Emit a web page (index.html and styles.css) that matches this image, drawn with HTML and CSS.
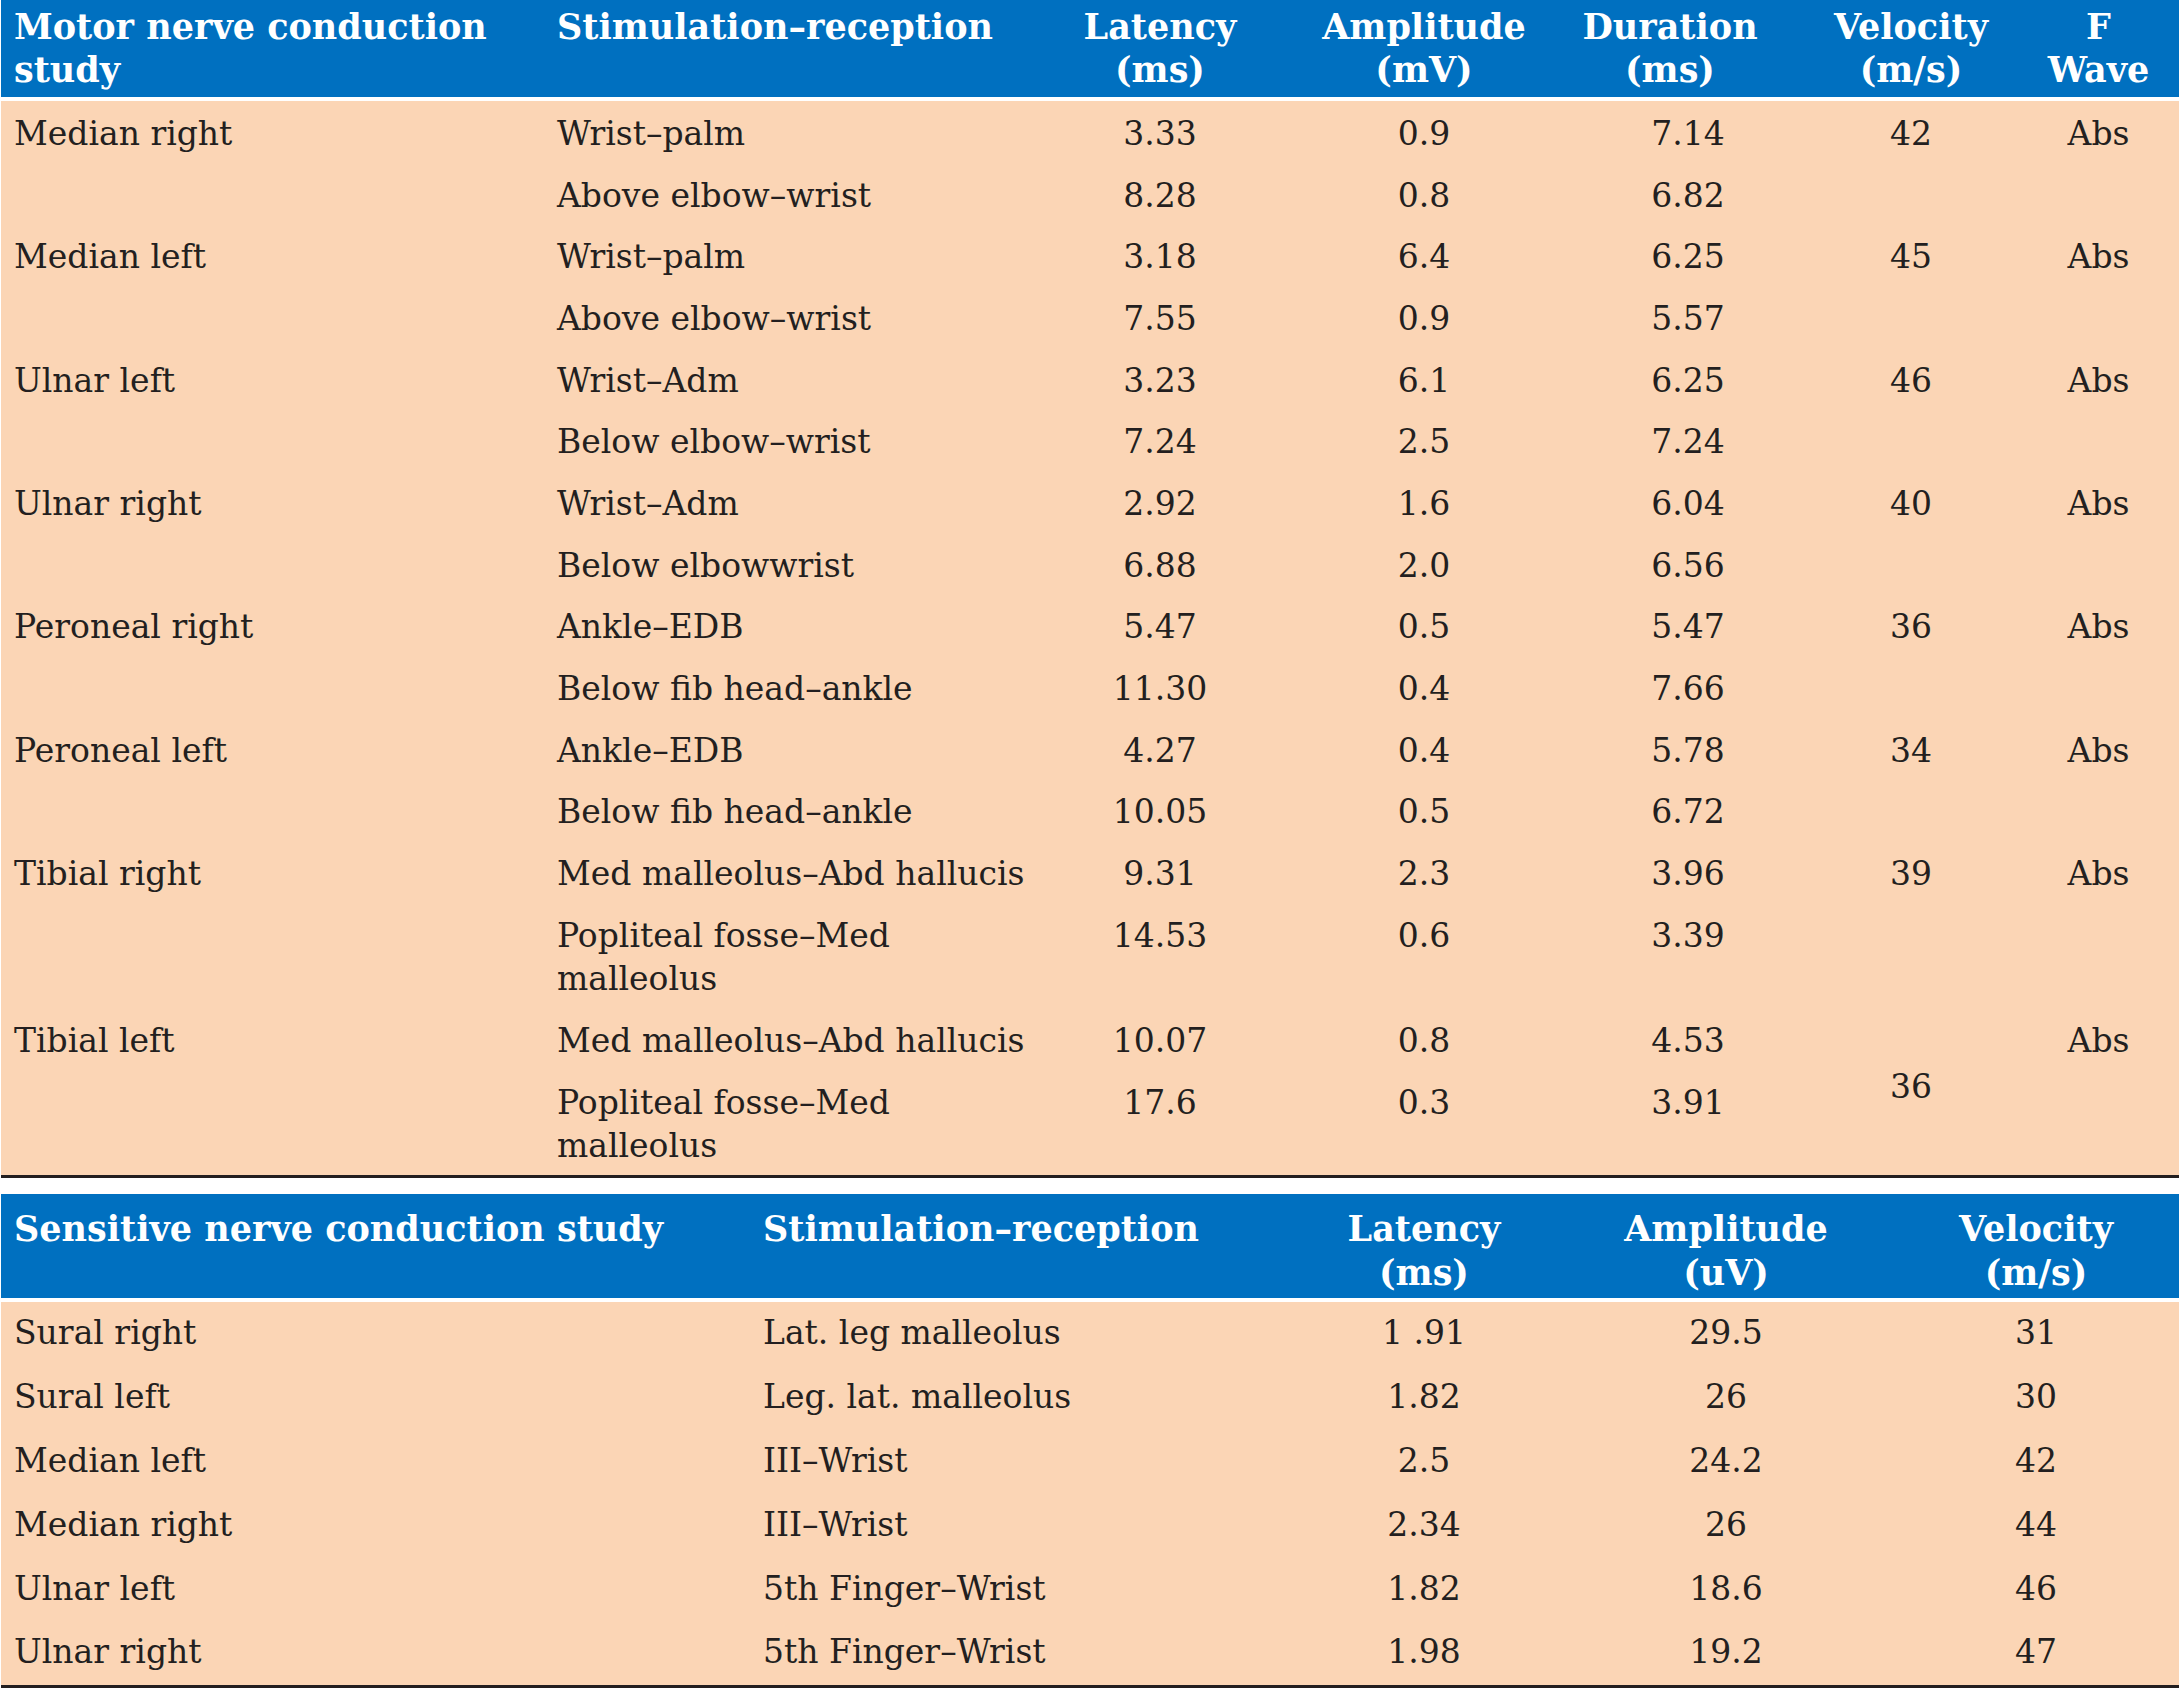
FILE: index.html
```html
<!DOCTYPE html>
<html lang="en">
<head>
<meta charset="utf-8">
<title>Nerve conduction studies</title>
<link rel="stylesheet" href="styles.css">
</head>
<body>
<div class="page">
<table class="ncs motor">
  <colgroup>
    <col class="m1"><col class="m2"><col class="m3"><col class="m4"><col class="m5"><col class="m6"><col class="m7">
  </colgroup>
  <thead>
    <tr>
      <th>Motor nerve conduction<br>study</th>
      <th>Stimulation–reception</th>
      <th class="num">Latency<br>(ms)</th>
      <th class="num">Amplitude<br>(mV)</th>
      <th class="num">Duration<br>(ms)</th>
      <th class="num">Velocity<br>(m/s)</th>
      <th class="num fw">F<br>Wave</th>
    </tr>
  </thead>
  <tbody>
    <tr><td rowspan="2">Median right</td><td>Wrist–palm</td><td class="num">3.33</td><td class="num">0.9</td><td class="num dur">7.14</td><td class="num" rowspan="2">42</td><td class="num fw" rowspan="2">Abs</td></tr>
    <tr><td>Above elbow–wrist</td><td class="num">8.28</td><td class="num">0.8</td><td class="num dur">6.82</td></tr>
    <tr><td rowspan="2">Median left</td><td>Wrist–palm</td><td class="num">3.18</td><td class="num">6.4</td><td class="num dur">6.25</td><td class="num" rowspan="2">45</td><td class="num fw" rowspan="2">Abs</td></tr>
    <tr><td>Above elbow–wrist</td><td class="num">7.55</td><td class="num">0.9</td><td class="num dur">5.57</td></tr>
    <tr><td rowspan="2">Ulnar left</td><td>Wrist–Adm</td><td class="num">3.23</td><td class="num">6.1</td><td class="num dur">6.25</td><td class="num" rowspan="2">46</td><td class="num fw" rowspan="2">Abs</td></tr>
    <tr><td>Below elbow–wrist</td><td class="num">7.24</td><td class="num">2.5</td><td class="num dur">7.24</td></tr>
    <tr><td rowspan="2">Ulnar right</td><td>Wrist–Adm</td><td class="num">2.92</td><td class="num">1.6</td><td class="num dur">6.04</td><td class="num" rowspan="2">40</td><td class="num fw" rowspan="2">Abs</td></tr>
    <tr><td>Below elbowwrist</td><td class="num">6.88</td><td class="num">2.0</td><td class="num dur">6.56</td></tr>
    <tr><td rowspan="2">Peroneal right</td><td>Ankle–EDB</td><td class="num">5.47</td><td class="num">0.5</td><td class="num dur">5.47</td><td class="num" rowspan="2">36</td><td class="num fw" rowspan="2">Abs</td></tr>
    <tr><td>Below fib head–ankle</td><td class="num">11.30</td><td class="num">0.4</td><td class="num dur">7.66</td></tr>
    <tr><td rowspan="2">Peroneal left</td><td>Ankle–EDB</td><td class="num">4.27</td><td class="num">0.4</td><td class="num dur">5.78</td><td class="num" rowspan="2">34</td><td class="num fw" rowspan="2">Abs</td></tr>
    <tr><td>Below fib head–ankle</td><td class="num">10.05</td><td class="num">0.5</td><td class="num dur">6.72</td></tr>
    <tr><td rowspan="2">Tibial right</td><td class="nowrap">Med malleolus–Abd hallucis</td><td class="num">9.31</td><td class="num">2.3</td><td class="num dur">3.96</td><td class="num" rowspan="2">39</td><td class="num fw" rowspan="2">Abs</td></tr>
    <tr><td>Popliteal fosse–Med<br>malleolus</td><td class="num">14.53</td><td class="num">0.6</td><td class="num dur">3.39</td></tr>
    <tr><td rowspan="2">Tibial left</td><td class="nowrap">Med malleolus–Abd hallucis</td><td class="num">10.07</td><td class="num">0.8</td><td class="num dur">4.53</td><td class="num mid" rowspan="2">36</td><td class="num fw" rowspan="2">Abs</td></tr>
    <tr><td>Popliteal fosse–Med<br>malleolus</td><td class="num">17.6</td><td class="num">0.3</td><td class="num dur">3.91</td></tr>
  </tbody>
</table>

<table class="ncs sensitive">
  <colgroup>
    <col class="s1"><col class="s2"><col class="s3"><col class="s4"><col class="s5">
  </colgroup>
  <thead>
    <tr>
      <th>Sensitive nerve conduction study</th>
      <th>Stimulation–reception</th>
      <th class="num">Latency<br>(ms)</th>
      <th class="num">Amplitude<br>(uV)</th>
      <th class="num">Velocity<br>(m/s)</th>
    </tr>
  </thead>
  <tbody>
    <tr><td>Sural right</td><td>Lat. leg malleolus</td><td class="num">1 .91</td><td class="num">29.5</td><td class="num">31</td></tr>
    <tr><td>Sural left</td><td>Leg. lat. malleolus</td><td class="num">1.82</td><td class="num">26</td><td class="num">30</td></tr>
    <tr><td>Median left</td><td>III–Wrist</td><td class="num">2.5</td><td class="num">24.2</td><td class="num">42</td></tr>
    <tr><td>Median right</td><td>III–Wrist</td><td class="num">2.34</td><td class="num">26</td><td class="num">44</td></tr>
    <tr><td>Ulnar left</td><td>5th Finger–Wrist</td><td class="num">1.82</td><td class="num">18.6</td><td class="num">46</td></tr>
    <tr><td>Ulnar right</td><td>5th Finger–Wrist</td><td class="num">1.98</td><td class="num">19.2</td><td class="num">47</td></tr>
  </tbody>
</table>
</div>
</body>
</html>
```

FILE: styles.css
```css
html, body {
  margin: 0;
  padding: 0;
  background: #ffffff;
}

body {
  font-family: "DejaVu Serif", "Liberation Serif", serif;
  color: #231f20;
}

.page {
  padding-left: 1px;
  width: 2178px;
}

.ncs {
  width: 2178px;
  table-layout: fixed;
  border-collapse: collapse;
  font-size: 33px;
  line-height: 43.4px;
  border-bottom: 3px solid #231f20;
}

.ncs th {
  background: #0070c0;
  color: #ffffff;
  font-size: 35px;
  font-weight: bold;
  text-align: left;
  vertical-align: top;
  padding: 5px 13px 5.5px 13px;
  border-bottom: 4px solid #ffffff;
}

.ncs td {
  background: #fbd5b5;
  text-align: left;
  vertical-align: top;
  padding: 10.6px 13px 7.7px 13px;
}

.ncs .num {
  text-align: center;
  padding-left: 0;
  padding-right: 0;
}

.ncs td.dur {
  padding-left: 36px;
}

.ncs .fw {
  padding-right: 20px;
}

.ncs td.mid {
  vertical-align: middle;
  padding-bottom: 20px;
}

.nowrap {
  white-space: nowrap;
}

/* motor table columns */
.m1 { width: 543px; }
.m2 { width: 484px; }
.m3 { width: 264px; }
.m4 { width: 264px; }
.m5 { width: 228px; }
.m6 { width: 254px; }
.m7 { width: 141px; }

/* sensitive table */
.sensitive {
  margin-top: 16px;
}

.sensitive th {
  padding-top: 13px;
  padding-bottom: 4.5px;
}

.sensitive td {
  padding-top: 8.9px;
  padding-bottom: 11.5px;
}

.s1 { width: 749px; }
.s2 { width: 539px; }
.s3 { width: 270px; }
.s4 { width: 334px; }
.s5 { width: 286px; }
```
